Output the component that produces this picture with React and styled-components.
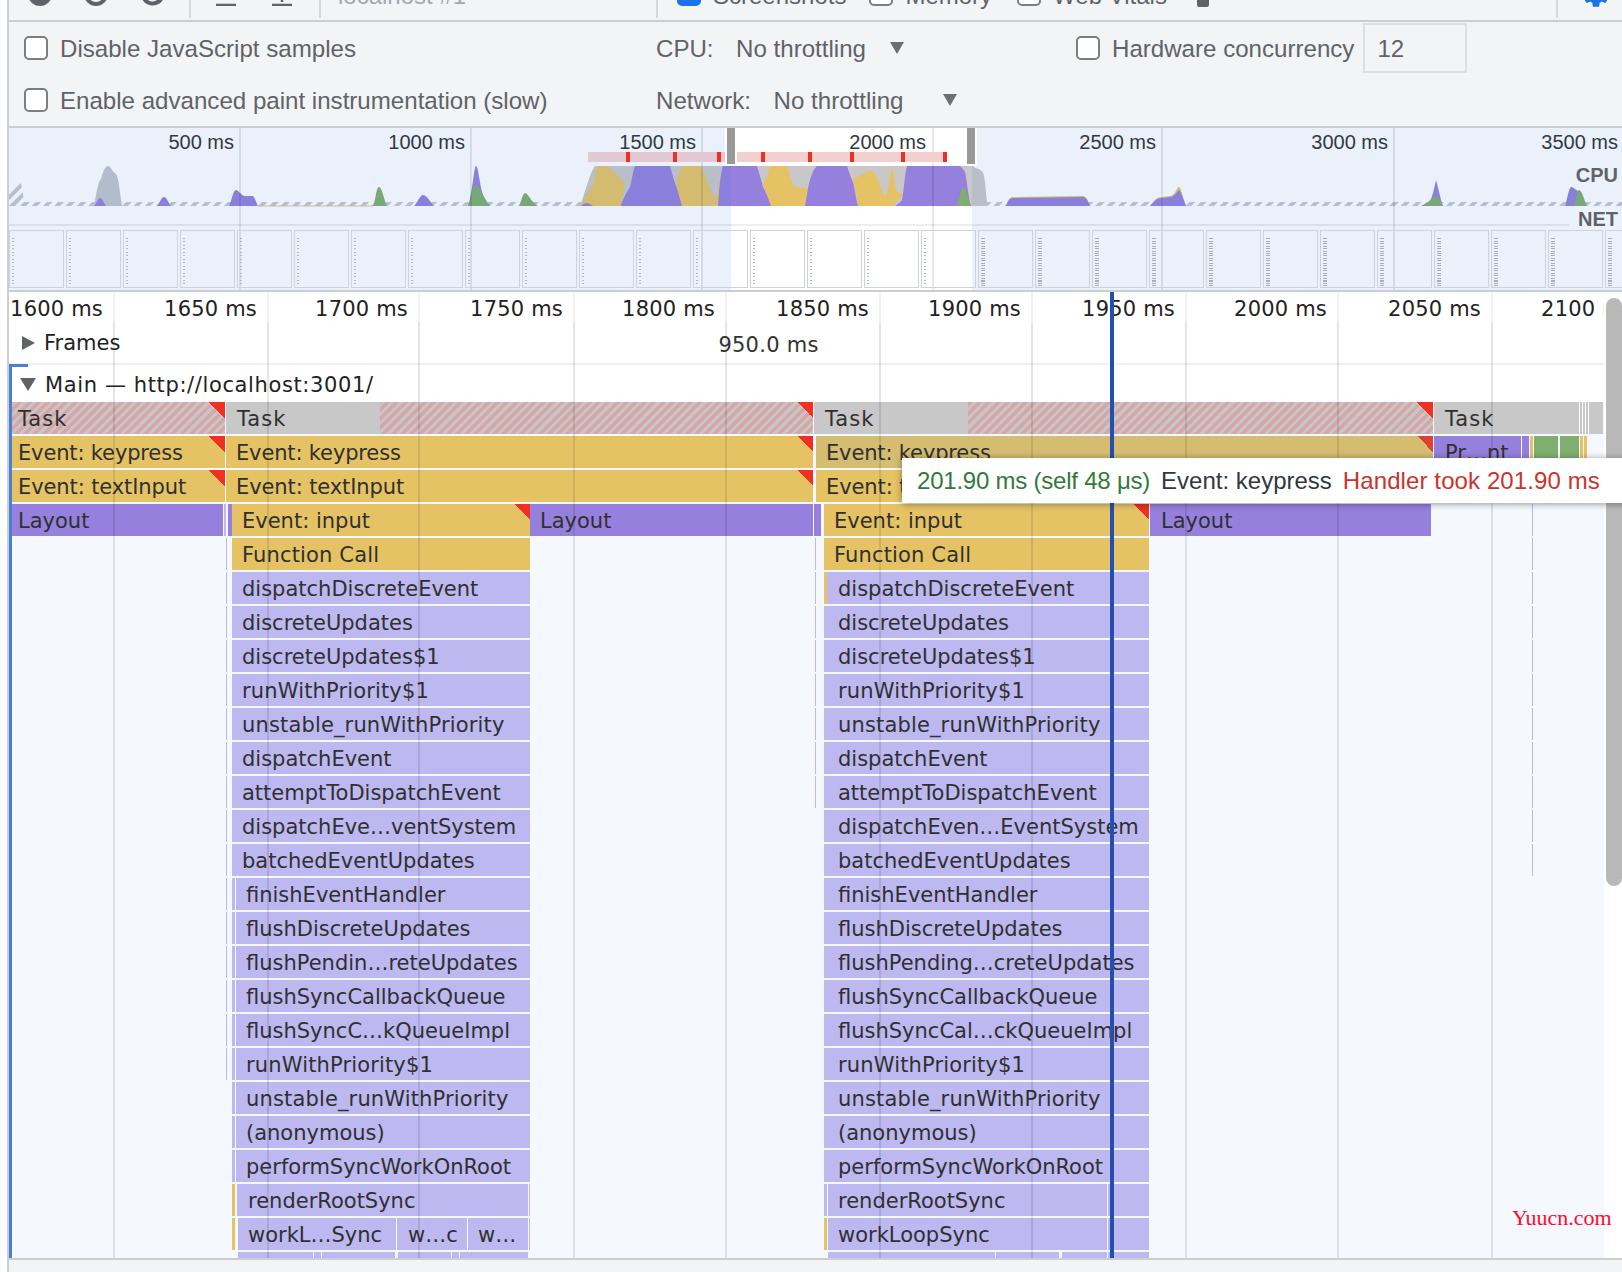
import React from "react";
import styled, { createGlobalStyle } from "styled-components";
import { MdDelete, MdSettings } from "react-icons/md";

const GlobalStyle = createGlobalStyle`
  html, body {
    margin: 0;
    background: #fff;
  }
  * {
    box-sizing: border-box;
  }
`;

const sans = `"Liberation Sans", Arial, sans-serif`;
const flameFont = `"DejaVu Sans", sans-serif`;

const Page = styled.div`
  width: 1622px;
  height: 1272px;
  padding-left: 7px;
  overflow: hidden;
`;

const Panel = styled.div`
  height: 1272px;
  border-left: 2px solid #cbcdd1;
  display: flex;
  flex-direction: column;
  background: #f3f4f6;
  font-family: ${sans};
`;

const Toolbar = styled.div`
  height: 22px;
  flex: none;
  overflow: hidden;
  border-bottom: 2px solid #cbcdd1;
`;

const ToolRow = styled.div`
  height: 48px;
  margin-top: -30px;
  display: flex;
  align-items: center;
  font-size: 24px;
  color: #5f6368;
`;

const ToolItem = styled.div`
  flex: none;
  display: flex;
  align-items: center;
  margin-left: ${(p) => p.$ml}px;
  margin-top: ${(p) => p.$mt || 0}px;
  width: ${(p) => (p.$w ? `${p.$w}px` : "auto")};
`;

const ToolSep = styled.div`
  flex: none;
  width: 2px;
  height: 48px;
  background: #d5d7da;
  margin-left: ${(p) => p.$ml}px;
`;

const ToolText = styled.span`
  margin-top: 4px;
  color: ${(p) => p.$c || "#5f6368"};
  white-space: nowrap;
`;

const Settings = styled.div`
  height: 106px;
  flex: none;
  display: grid;
  grid-template-columns: 632px 420px 1fr;
  grid-template-rows: 52px 52px;
  padding-left: 15px;
  font-size: 24.1px;
  color: #5f6368;
  border-bottom: 2px solid #cbcdd1;
`;

const Field = styled.div`
  display: flex;
  align-items: center;
  padding-top: 2px;
  white-space: nowrap;
`;

const Check = styled.span`
  flex: none;
  width: 24px;
  height: 24px;
  margin-top: ${(p) => p.$mt || 0}px;
  border: 2px solid ${(p) => (p.$on ? "#1a73e8" : "#7b7d81")};
  border-radius: 5px;
  background: ${(p) => (p.$on ? "#1a73e8" : "#fff")};
  margin-right: 12px;
`;

const Value = styled.span`
  margin-left: 22.5px;
`;

const Arrow = styled.span`
  width: 0;
  height: 0;
  margin-left: ${(p) => p.$ml}px;
  margin-top: -3px;
  border-left: 7.5px solid transparent;
  border-right: 7.5px solid transparent;
  border-top: 12px solid #6b6e72;
`;

const NumberBox = styled.div`
  width: 104px;
  height: 50px;
  margin-left: 9px;
  margin-top: -2px;
  padding-left: 12px;
  line-height: 48px;
  border: 2px solid #dcdee2;
`;

const Overview = styled.div`
  height: 164px;
  flex: none;
  position: relative;
  overflow: hidden;
  background: #fff;
  border-bottom: 2px solid #cbcdd1;
  display: flex;
  flex-direction: column;
  justify-content: flex-end;
`;

const ChartSvg = styled.svg`
  position: absolute;
  left: -9px;
  top: 38px;
  display: block;
`;

const Dim = styled.div`
  position: absolute;
  top: 0;
  bottom: 0;
  left: ${(p) => p.$x - 9}px;
  width: ${(p) => p.$w}px;
  background: rgba(56, 121, 217, 0.1);
`;

const SelectionTop = styled.div`
  position: absolute;
  top: 0;
  height: 38px;
  left: 716px;
  width: 252px;
  background: #fff;
`;

const OverviewLine = styled.div`
  position: absolute;
  top: 0;
  bottom: 0;
  width: 2px;
  left: ${(p) => p.$x - 9}px;
  background: rgba(0, 0, 0, 0.09);
`;

const NetLine = styled.div`
  position: absolute;
  left: 0;
  width: 1561px;
  top: 96px;
  height: 2px;
  background: rgba(0, 0, 0, 0.07);
`;

const OverviewTime = styled.div`
  position: absolute;
  top: 2px;
  left: ${(p) => p.$x - 9 - 205}px;
  width: 200px;
  text-align: right;
  font-size: 20px;
  line-height: 24px;
  color: #303942;
`;

const LongTaskBar = styled.div`
  position: absolute;
  top: 24px;
  height: 10px;
  left: ${(p) => p.$x - 9}px;
  width: ${(p) => p.$w}px;
  background: ${(p) => p.$c};
`;

const Gripper = styled.div`
  position: absolute;
  top: 0;
  height: 36px;
  width: 8px;
  left: ${(p) => p.$x - 9}px;
  background: #999;
`;

const TrackName = styled.div`
  position: absolute;
  right: 4px;
  top: ${(p) => p.$top}px;
  font-size: 20px;
  font-weight: 700;
  line-height: 24px;
  color: #5f6368;
  background: ${(p) => (p.$bg ? "#ecf2fb" : "transparent")};
  padding-left: 9px;
`;

const Strip = styled.div`
  position: relative;
  display: flex;
  gap: 2.5px;
  padding-left: 0.3px;
  margin-bottom: 2px;
`;

const Shot = styled.div`
  flex: none;
  width: 54.5px;
  height: 58px;
  border: 1px solid #cdd2dc;
  padding: 7px 0 0 2px;
`;

const ShotText = styled.div`
  width: ${(p) => (p.$dense ? 4 : 2)}px;
  height: 48px;
  background: repeating-linear-gradient(
    to bottom,
    ${(p) => (p.$dense ? "#a9adb6" : "#b3b7c0")} 0 1px,
    transparent 1px ${(p) => (p.$dense ? 2.5 : 3.5)}px
  );
`;

const Timeline = styled.div`
  position: relative;
  flex: none;
  height: 966px;
  background: #fff;
  overflow: hidden;
  font-family: ${flameFont};
  font-size: 21px;
  color: #222;
`;

const Ruler = styled.div`
  height: 34px;
  display: flex;
  white-space: nowrap;
`;

const Tick = styled.div`
  flex: none;
  width: ${(p) => p.$w}px;
  padding-right: 10px;
  text-align: right;
  line-height: 34px;
  letter-spacing: 0.2px;
`;

const FramesHeader = styled.div`
  display: flex;
  align-items: center;
  height: 39px;
  padding: 0 0 4px 13px;
  border-bottom: 2px solid #f1f1f1;
`;

const MainHeader = styled.div`
  display: flex;
  align-items: center;
  height: 37px;
  padding: 2px 0 0 11px;
  letter-spacing: 0.62px;
`;

const Side = styled.span`
  width: 0;
  height: 0;
  margin-right: 9px;
  border-top: 7px solid transparent;
  border-bottom: 7px solid transparent;
  border-left: 13px solid #5f6368;
`;

const Down = styled.span`
  width: 0;
  height: 0;
  margin-right: 9px;
  border-left: 8px solid transparent;
  border-right: 8px solid transparent;
  border-top: 13px solid #5f6368;
`;

const Duration = styled.span`
  margin-left: 598px;
  padding-top: 4px;
  letter-spacing: 0.25px;
  color: #333;
`;

const Flame = styled.div`
  position: relative;
  width: 1595px;
  height: 856px;
  background: #f5f9ff;
  overflow: hidden;
`;

const FlameRow = styled.div`
  position: relative;
  height: 32px;
  margin-bottom: 2px;
`;

const fills = {
  hatch: "repeating-linear-gradient(-45deg, #c6c6c6 0 3px, #d8a6a6 3px 6.5px)",
  gray: "#c8c8c8",
  yellow: "#e5c365",
  hover: "#d4bc70",
  purple: "#9580dd",
  js: "#bdb8f0",
  green: "#7fae6e",
  white: "#fff",
};

const Bar = styled.div`
  position: absolute;
  top: 0;
  height: 32px;
  left: ${(p) => p.$x - 9}px;
  width: ${(p) => p.$w}px;
  padding-left: ${(p) => p.$pad || 0}px;
  background: ${(p) => fills[p.$c]};
  line-height: 34px;
  letter-spacing: ${(p) => p.$ls || 0}px;
  white-space: nowrap;
  overflow: hidden;
  color: #303030;

  &::after {
    content: "";
    display: ${(p) => (p.$corner ? "block" : "none")};
    position: absolute;
    top: 0;
    right: 0;
    width: 16px;
    height: 16px;
    background: linear-gradient(to bottom left, ${(p) => (p.$c === "hover" ? "#e04030" : "#f03020")} 50%, transparent 50%);
  }
`;

const Bracket = styled.div`
  position: absolute;
  left: -1px;
  top: 72px;
  bottom: 0;
  width: 4px;
  background: #4a7fd6;

  &::before {
    content: "";
    position: absolute;
    left: 0;
    top: 0;
    width: 20px;
    height: 3px;
    background: #4a7fd6;
  }
`;

const GridLine = styled.div`
  position: absolute;
  top: 0;
  bottom: 0;
  width: 2px;
  left: ${(p) => p.$x - 9}px;
  background: linear-gradient(to bottom, rgba(0, 0, 0, 0.05) 30px, rgba(0, 0, 0, 0.1) 30px);
`;

const Cursor = styled.div`
  position: absolute;
  top: 0;
  bottom: 0;
  left: 1101px;
  width: 4px;
  background: #2150ae;
`;

const Tooltip = styled.div`
  position: absolute;
  left: 893px;
  top: 166px;
  width: 760px;
  height: 45px;
  display: flex;
  align-items: center;
  gap: 11px;
  padding-left: 15px;
  background: #fff;
  box-shadow: 0 1px 7px rgba(0, 0, 0, 0.4);
  font-family: ${sans};
  font-size: 24px;
  white-space: nowrap;
`;

const TipText = styled.span`
  color: ${(p) => p.$c};
  letter-spacing: ${(p) => p.$ls || 0}px;
`;

const Scrollbar = styled.div`
  position: absolute;
  left: 1597px;
  top: 6px;
  width: 16px;
  height: 588px;
  border-radius: 8px;
  background: #b9b9b9;
`;

const ScrollTrack = styled.div`
  position: absolute;
  left: 1595px;
  top: 0;
  bottom: 0;
  width: 18px;
  background: #fff;
`;

const Watermark = styled.div`
  position: absolute;
  left: 1503px;
  top: 914px;
  font-family: "Liberation Serif", serif;
  font-size: 22px;
  line-height: 24px;
  color: #ff0a2a;
`;

const Footer = styled.div`
  flex: 1;
  border-top: 2px solid #cbcdd1;
  background: #f3f4f6;
`;

const IconStroke = styled.svg`
  display: block;
  fill: none;
  stroke: #5f6368;
  stroke-width: 4;
`;

const overviewGrid = [239, 470, 701, 932, 1161, 1393];
const overviewTimes = [
  [239, "500 ms"],
  [470, "1000 ms"],
  [701, "1500 ms"],
  [931, "2000 ms"],
  [1161, "2500 ms"],
  [1393, "3000 ms"],
  [1623, "3500 ms"],
];
const redTicks = [626, 673, 717, 761, 808, 850, 901, 943];
const flameGrid = [113, 267, 418, 573, 725, 879, 1031, 1185, 1337, 1491];
const rulerTicks = ["1600 ms", "1650 ms", "1700 ms", "1750 ms", "1800 ms", "1850 ms", "1900 ms", "1950 ms", "2000 ms", "2050 ms", "2100 ms"];
const rulerWidths = [104, 154, 151, 155, 152, 154, 152, 154, 152, 154, 153];

const stack = [
  ["dispatchDiscreteEvent", "dispatchDiscreteEvent"],
  ["discreteUpdates", "discreteUpdates"],
  ["discreteUpdates$1", "discreteUpdates$1"],
  ["runWithPriority$1", "runWithPriority$1"],
  ["unstable_runWithPriority", "unstable_runWithPriority"],
  ["dispatchEvent", "dispatchEvent"],
  ["attemptToDispatchEvent", "attemptToDispatchEvent"],
  ["dispatchEve…ventSystem", "dispatchEven…EventSystem"],
  ["batchedEventUpdates", "batchedEventUpdates"],
  ["finishEventHandler", "finishEventHandler"],
  ["flushDiscreteUpdates", "flushDiscreteUpdates"],
  ["flushPendin…reteUpdates", "flushPending…creteUpdates"],
  ["flushSyncCallbackQueue", "flushSyncCallbackQueue"],
  ["flushSyncC…kQueueImpl", "flushSyncCal…ckQueueImpl"],
  ["runWithPriority$1", "runWithPriority$1"],
  ["unstable_runWithPriority", "unstable_runWithPriority"],
  ["(anonymous)", "(anonymous)"],
  ["performSyncWorkOnRoot", "performSyncWorkOnRoot"],
];

const topRows = [
  [
    { x: 12, w: 213, c: "hatch", label: "Task", pad: 6, corner: true, ls: 1 },
    { x: 226, w: 154, c: "gray", label: "Task", pad: 11, ls: 1 },
    { x: 380, w: 433, c: "hatch", corner: true },
    { x: 814, w: 154, c: "gray", label: "Task", pad: 11, ls: 1 },
    { x: 968, w: 465, c: "hatch", corner: true },
    { x: 1434, w: 169, c: "gray", label: "Task", pad: 11, ls: 1 },
    { x: 1579, w: 1, c: "white" },
    { x: 1582, w: 1, c: "white" },
    { x: 1585, w: 1, c: "white" },
    { x: 1588, w: 1, c: "white" },
  ],
  [
    { x: 12, w: 213, c: "yellow", label: "Event: keypress", pad: 6, corner: true, ls: -0.15 },
    { x: 226, w: 587, c: "yellow", label: "Event: keypress", pad: 10, corner: true, ls: -0.15 },
    { x: 816, w: 617, c: "hover", label: "Event: keypress", pad: 10, corner: true, ls: -0.15 },
    { x: 1434, w: 87, c: "purple", label: "Pr…nt", pad: 11 },
    { x: 1522, w: 7, c: "purple" },
    { x: 1530, w: 3, c: "yellow" },
    { x: 1534, w: 24, c: "green" },
    { x: 1560, w: 19, c: "green" },
    { x: 1580, w: 3, c: "yellow" },
    { x: 1584, w: 3, c: "yellow" },
  ],
  [
    { x: 12, w: 213, c: "yellow", label: "Event: textInput", pad: 6, corner: true, ls: -0.1 },
    { x: 226, w: 587, c: "yellow", label: "Event: textInput", pad: 10, corner: true, ls: -0.1 },
    { x: 816, w: 617, c: "yellow", label: "Event: textInput", pad: 10, corner: true, ls: -0.1 },
  ],
  [
    { x: 12, w: 211, c: "purple", label: "Layout", pad: 6 },
    { x: 224, w: 2, c: "js" },
    { x: 228, w: 4, c: "purple" },
    { x: 232, w: 298, c: "yellow", label: "Event: input", pad: 10, corner: true },
    { x: 530, w: 283, c: "purple", label: "Layout", pad: 10 },
    { x: 814, w: 7, c: "purple" },
    { x: 824, w: 325, c: "yellow", label: "Event: input", pad: 10, corner: true },
    { x: 1150, w: 281, c: "purple", label: "Layout", pad: 11 },
    { x: 1532, w: 1, c: "js" },
  ],
  [
    { x: 226, w: 1, c: "js" },
    { x: 232, w: 298, c: "yellow", label: "Function Call", pad: 10, ls: 0.15 },
    { x: 815, w: 1, c: "js" },
    { x: 824, w: 325, c: "yellow", label: "Function Call", pad: 10, ls: 0.15 },
    { x: 1532, w: 1, c: "js" },
  ],
];

const stackRows = stack.map(([left, right], i) => {
  const ls = left.startsWith("runWith") || left.startsWith("unstable") ? 0.15 : 0;
  const bars = [];
  if (i < 15) bars.push({ x: 226, w: 1, c: "js" });
  if (i < 9) {
    bars.push({ x: 232, w: 298, c: "js", label: left, pad: 10, ls });
  } else {
    bars.push({ x: 232, w: 3, c: "js" });
    bars.push({ x: 236, w: 294, c: "js", label: left, pad: 10, ls });
  }
  if (i < 7) bars.push({ x: 815, w: 1, c: "js" });
  bars.push({ x: 824, w: 3, c: i === 0 ? "yellow" : "js" });
  bars.push({ x: 827, w: 322, c: "js", label: right, pad: 11, ls });
  if (i < 9) bars.push({ x: 1532, w: 1, c: "js" });
  return bars;
});

const bottomRows = [
  [
    { x: 232, w: 3, c: "yellow" },
    { x: 237, w: 291, c: "js", label: "renderRootSync", pad: 11 },
    { x: 529, w: 1, c: "js" },
    { x: 824, w: 3, c: "js" },
    { x: 828, w: 279, c: "js", label: "renderRootSync", pad: 10 },
    { x: 1108, w: 41, c: "js" },
  ],
  [
    { x: 232, w: 3, c: "yellow" },
    { x: 238, w: 158, c: "js", label: "workL…Sync", pad: 10 },
    { x: 397, w: 70, c: "js", label: "w…c", pad: 11 },
    { x: 468, w: 60, c: "js", label: "w…", pad: 10 },
    { x: 529, w: 1, c: "js" },
    { x: 824, w: 3, c: "yellow" },
    { x: 828, w: 279, c: "js", label: "workLoopSync", pad: 10 },
    { x: 1108, w: 41, c: "js" },
  ],
  [
    { x: 238, w: 75, c: "js" },
    { x: 314, w: 7, c: "js" },
    { x: 322, w: 73, c: "js" },
    { x: 398, w: 53, c: "js" },
    { x: 452, w: 7, c: "js" },
    { x: 460, w: 68, c: "js" },
    { x: 828, w: 167, c: "js" },
    { x: 996, w: 63, c: "js" },
    { x: 1062, w: 45, c: "js" },
    { x: 1108, w: 41, c: "js" },
  ],
];

const flameRows = [...topRows, ...stackRows, ...bottomRows];

const shots = Array.from({ length: 29 }, (_, i) => i);

function CpuChart() {
  return (
    <ChartSvg width="1622" height="41" viewBox="0 166 1622 41">
      <defs>
        <pattern id="idle" width="8" height="8" patternUnits="userSpaceOnUse" patternTransform="rotate(45)">
          <rect width="4" height="8" fill="#c4c8d0" />
        </pattern>
      </defs>
      <rect x="9" y="202" width="1613" height="4" fill="url(#idle)" />
      <path d="M9 206V190L21 183L25 206Z" fill="url(#idle)" />
      <path d="M94 206C97 190 98 182 101 179C103 172 105 166 108 166C111 166 112 172 116 174C119 178 120 195 122 206Z" fill="#c0c4cb" />
      <path d="M94 206C97 203 98 198 100 198C102 198 104 203 106 206Z" fill="#9580dd" />
      <path d="M157 206C160 203 161 197 164 197C167 197 168 203 171 206Z" fill="#9580dd" />
      <path d="M229 206C232 200 233 190 236 190C239 190 241 196 245 196L253 196C255 198 256 202 258 206Z" fill="#9580dd" />
      <path d="M258 206H373" stroke="#d9c79a" strokeWidth="1" />
      <path d="M373 206C376 200 376 187 379 187C382 187 384 200 387 206Z" fill="#7fae6e" />
      <path d="M414 206C418 202 420 195 423 195C427 195 430 202 434 206Z" fill="#9580dd" />
      <path d="M468 206C472 196 474 166 476 166C478 166 480 185 482 192C484 198 486 203 490 206Z" fill="#9580dd" />
      <path d="M468 206C471 200 472 185 475 185C479 185 482 195 490 206Z" fill="#7fae6e" />
      <path d="M519 206C521 202 523 193 525 193C528 193 531 202 538 206Z" fill="#7fae6e" />
      <path d="M580 206C586 190 590 172 595 166H973C977 170 983 168 984 176C986 186 986 200 988 206Z" fill="#c8c8c8" />
      <path d="M581 206C585 196 590 190 593 184C595 175 596 168 598 166H608C612 172 620 176 625 184L621 206Z" fill="#e5c365" />
      <path d="M581 206C585 202 588 202 593 206Z" fill="#9580dd" />
      <path d="M680 206C678 195 676 188 677 180C679 172 680 168 683 166H700C704 172 706 178 708 182C711 190 713 197 715 197C718 197 719 180 721 176L718 206Z" fill="#e5c365" />
      <path d="M763 185C764 182 766 178 767 176C768 172 769 168 771 166H787C789 172 791 180 793 185C797 188 803 188 808 188L805 206H771Z" fill="#e5c365" />
      <path d="M853 178C858 178 866 172 870 170C874 172 876 176 878 179C880 186 883 196 885 196C888 196 889 176 892 166C893 172 894 180 896 190C899 194 902 194 904 193L893 206H858Z" fill="#e5c365" />
      <path d="M621 206C622 200 628 190 630 187C632 180 633 170 635 166H670C672 172 673 178 675 183C678 190 680 200 682 206Z" fill="#9580dd" />
      <path d="M718 206C719 190 720 180 721 175C722 170 722 168 723 166H757C759 172 761 180 763 187C766 192 769 200 771 206Z" fill="#9580dd" />
      <path d="M805 206C807 196 808 186 810 180C812 174 814 168 817 166H847C849 172 851 178 853 182C855 190 856 200 858 206Z" fill="#9580dd" />
      <path d="M895 206C897 204 900 203 902 200C904 190 905 172 907 166H960C962 168 964 170 965 172C967 180 968 196 971 206Z" fill="#9580dd" />
      <path d="M957 206C959 200 961 187 963 187C965 187 969 200 971 206Z" fill="#7fae6e" />
      <path d="M1006 206C1008 201 1009 198 1012 197L1083 196C1087 197 1088 201 1090 206Z" fill="#e5c365" />
      <path d="M1006 206C1008 201 1009 199 1012 198L1083 197C1087 198 1088 201 1090 206Z" fill="#9580dd" />
      <path d="M1150 206C1154 201 1156 197 1162 197L1171 196C1175 195 1177 187 1179 187C1181 187 1183 198 1186 206Z" fill="#e5c365" />
      <path d="M1150 206C1154 202 1156 198 1162 198L1171 197C1175 196 1177 192 1179 190C1181 192 1183 198 1186 206Z" fill="#9580dd" />
      <path d="M1427 206C1431 202 1434 190 1436 180C1438 186 1440 198 1443 206Z" fill="#9580dd" />
      <path d="M1421 206C1426 204 1433 198 1436 195C1438 198 1441 202 1443 206Z" fill="#7fae6e" />
      <path d="M1565 206C1567 200 1569 187 1571 187C1574 187 1575 190 1577 190L1587 206Z" fill="#9580dd" />
      <path d="M1574 206C1576 200 1577 190 1579 190C1582 190 1584 200 1587 206Z" fill="#7fae6e" />
    </ChartSvg>
  );
}

function ToolbarRow() {
  return (
    <Toolbar>
      <ToolRow>
        <ToolItem $ml={19}>
          <svg width="24" height="24" viewBox="0 0 24 24">
            <circle cx="12" cy="12" r="12" fill="#5f6368" />
          </svg>
        </ToolItem>
        <ToolItem $ml={32}>
          <IconStroke width="24" height="24" viewBox="0 0 24 24">
            <circle cx="12" cy="12" r="10" />
          </IconStroke>
        </ToolItem>
        <ToolItem $ml={33}>
          <IconStroke width="24" height="24" viewBox="0 0 24 24">
            <path d="M5 4A10 10 0 1 0 20 6" />
            <path d="M8 8L20 20" />
          </IconStroke>
        </ToolItem>
        <ToolSep $ml={24} />
        <ToolItem $ml={25}>
          <IconStroke width="20" height="24" viewBox="0 0 20 24">
            <path d="M0 23H20M10 0V16" strokeWidth="2.5" />
          </IconStroke>
        </ToolItem>
        <ToolItem $ml={36}>
          <IconStroke width="20" height="24" viewBox="0 0 20 24">
            <path d="M0 23H20M10 0V20" strokeWidth="2.5" />
          </IconStroke>
        </ToolItem>
        <ToolSep $ml={27} />
        <ToolItem $ml={17} $w={318}>
          <ToolText $c="#a5a8ad">localhost #1</ToolText>
        </ToolItem>
        <ToolSep $ml={0} />
        <ToolItem $ml={19}>
          <Check $on />
          <ToolText>Screenshots</ToolText>
        </ToolItem>
        <ToolItem $ml={23}>
          <Check />
          <ToolText>Memory</ToolText>
        </ToolItem>
        <ToolItem $ml={25}>
          <Check />
          <ToolText>Web Vitals</ToolText>
        </ToolItem>
        <ToolItem $ml={24} $mt={8}>
          <MdDelete size={24} color="#5f6368" />
        </ToolItem>
        <ToolSep $ml={341} />
        <ToolItem $ml={22}>
          <MdSettings size={32} color="#1a73e8" />
        </ToolItem>
      </ToolRow>
    </Toolbar>
  );
}

export default function App() {
  return (
    <Page>
      <GlobalStyle />
      <Panel>
        <ToolbarRow />
        <Settings>
          <Field>
            <Check $mt={-2} />
            Disable JavaScript samples
          </Field>
          <Field>
            CPU:
            <Value>No throttling</Value>
            <Arrow $ml={24} />
          </Field>
          <Field>
            <Check $mt={-2} />
            Hardware concurrency
            <NumberBox>12</NumberBox>
          </Field>
          <Field>
            <Check $mt={-2} />
            Enable advanced paint instrumentation (slow)
          </Field>
          <Field>
            Network:
            <Value>No throttling</Value>
            <Arrow $ml={40} />
          </Field>
        </Settings>
        <Overview>
          <CpuChart />
          <Dim $x={9} $w={722} />
          <Dim $x={972} $w={650} />
          <SelectionTop />
          {overviewGrid.map((x) => (
            <OverviewLine key={x} $x={x} />
          ))}
          <NetLine />
          {overviewTimes.map(([x, label]) => (
            <OverviewTime key={label} $x={x}>
              {label}
            </OverviewTime>
          ))}
          <LongTaskBar $x={588} $w={137} $c="#e2c8d2" />
          <LongTaskBar $x={737} $w={210} $c="#f2d0d0" />
          {redTicks.map((x) => (
            <LongTaskBar key={x} $x={x} $w={4} $c="#ee3024" />
          ))}
          <Gripper $x={727} />
          <Gripper $x={967} />
          <TrackName $top={35}>CPU</TrackName>
          <TrackName $top={79} $bg>
            NET
          </TrackName>
          <Strip>
            {shots.map((i) => (
              <Shot key={i}>
                <ShotText $dense={i >= 17} />
              </Shot>
            ))}
          </Strip>
        </Overview>
        <Timeline>
          <Ruler>
            {rulerTicks.map((label, i) => (
              <Tick key={label} $w={rulerWidths[i]}>
                {label}
              </Tick>
            ))}
          </Ruler>
          <FramesHeader>
            <Side />
            Frames
            <Duration>950.0 ms</Duration>
          </FramesHeader>
          <MainHeader>
            <Down />
            Main — http://localhost:3001/
          </MainHeader>
          <Flame>
            {flameRows.map((bars, r) => (
              <FlameRow key={r}>
                {bars.map((b, i) => (
                  <Bar key={i} $x={b.x} $w={b.w} $c={b.c} $pad={b.pad} $corner={b.corner} $ls={b.ls}>
                    {b.label}
                  </Bar>
                ))}
              </FlameRow>
            ))}
          </Flame>
          <Bracket />
          {flameGrid.map((x) => (
            <GridLine key={x} $x={x} />
          ))}
          <Cursor />
          <ScrollTrack />
          <Scrollbar />
          <Tooltip>
            <TipText $c="#327a3a" $ls={-0.22}>201.90 ms (self 48 μs)</TipText>
            <TipText $c="#30383f">Event: keypress</TipText>
            <TipText $c="#c9352b" $ls={0.1}>Handler took 201.90 ms</TipText>
          </Tooltip>
          <Watermark>Yuucn.com</Watermark>
        </Timeline>
        <Footer />
      </Panel>
    </Page>
  );
}
